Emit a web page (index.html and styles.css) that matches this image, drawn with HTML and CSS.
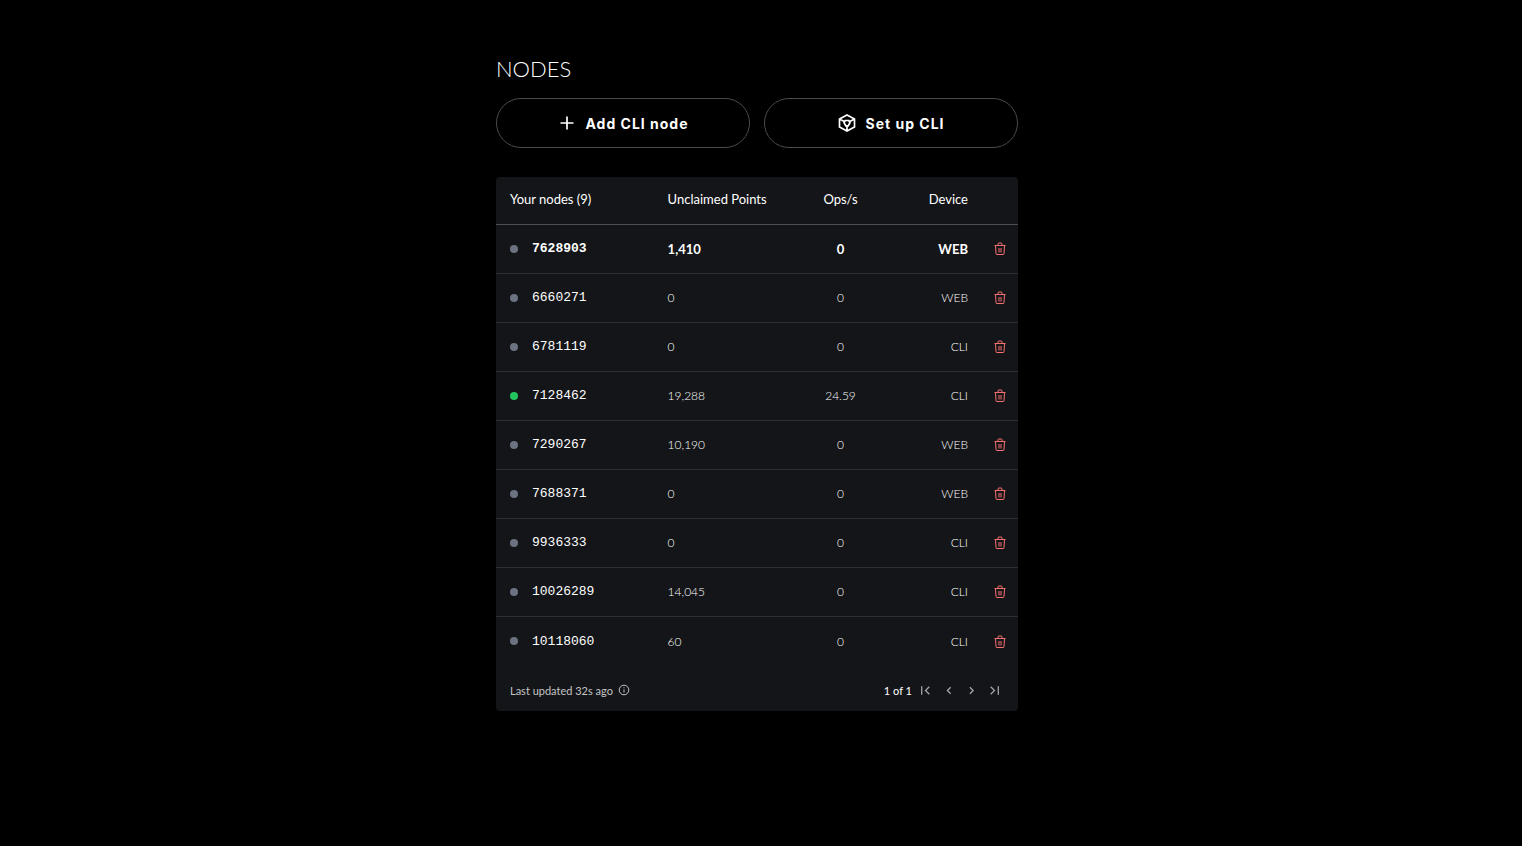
FILE: index.html
```html
<!DOCTYPE html>
<html lang="en">
<head>
    <meta charset="UTF-8">
    <meta name="viewport" content="width=device-width, initial-scale=1.0">
    <title>Nodes</title>
    <link rel="stylesheet" href="styles.css">
</head>
<body>
    <svg class="sprite" aria-hidden="true">
        <symbol id="trash" viewBox="0 0 12 13">
            <path d="M.5 3.500h11M1.500 3.500l.5 8a1 1 0 0 0 1 1h6a1 1 0 0 0 1-1l.5-8M4 3.500V2a1 1 0 0 1 1-1h2a1 1 0 0 1 1 1v1.500M5 6v4.500M7 6v4.500"/>
        </symbol>
    </svg>

    <main class="container">
        <h1>NODES</h1>

        <div class="actions">
            <button type="button" class="action">
                <svg class="action-icon" viewBox="0 0 20 20"><path d="M10 3.500v13M3.500 10h13"/></svg>
                Add CLI node
            </button>
            <button type="button" class="action">
                <svg class="action-icon" viewBox="0 0 20 20"><path d="M10 2l7.500 4v8L10 18l-7.500-4V6zM2.500 6l4.700 2.500M17.500 6l-4.700 2.500M10 13v5M8.200 7.500h3.600l1.200 2.300-1.800 3H8.800L7 9.800z"/></svg>
                Set up CLI
            </button>
        </div>

        <section class="panel">
            <table class="nodes">
                <thead>
                    <tr>
                        <th class="col-node">Your nodes (9)</th>
                        <th class="col-points">Unclaimed Points</th>
                        <th class="col-ops">Ops/s</th>
                        <th class="col-device">Device</th>
                        <td class="col-delete"></td>
                    </tr>
                </thead>
                <tbody id="nodeRows"></tbody>
            </table>

            <div class="panel-footer">
                <div class="updated">
                    Last updated 32s ago
                    <svg class="info-icon" viewBox="0 0 12 12"><circle cx="6" cy="6" r="4.800"/><path d="M6 5.500v3M6 3.300v1"/></svg>
                </div>
                <div class="pager">
                    <span>1 of 1</span>
                    <button type="button" aria-label="First page"><svg viewBox="0 0 12 12"><path d="M2.500 2v8M9.500 2.500L6 6l3.500 3.500"/></svg></button>
                    <button type="button" aria-label="Previous page"><svg viewBox="0 0 12 12"><path d="M8 3L5 6l3 3"/></svg></button>
                    <button type="button" aria-label="Next page"><svg viewBox="0 0 12 12"><path d="M4.500 3l3 3-3 3"/></svg></button>
                    <button type="button" aria-label="Last page"><svg viewBox="0 0 12 12"><path d="M2.500 2.500L6 6 2.500 9.500M9.500 2v8"/></svg></button>
                </div>
            </div>
        </section>
    </main>

    <script>
        // current: the node running in this browser
        const nodes = [
            { id: '7628903', points: '1,410', ops: '0', device: 'WEB', current: true },
            { id: '6660271', points: '0', ops: '0', device: 'WEB' },
            { id: '6781119', points: '0', ops: '0', device: 'CLI' },
            { id: '7128462', points: '19,288', ops: '24.59', device: 'CLI', online: true },
            { id: '7290267', points: '10,190', ops: '0', device: 'WEB' },
            { id: '7688371', points: '0', ops: '0', device: 'WEB' },
            { id: '9936333', points: '0', ops: '0', device: 'CLI' },
            { id: '10026289', points: '14,045', ops: '0', device: 'CLI' },
            { id: '10118060', points: '60', ops: '0', device: 'CLI' }
        ];

        document.getElementById('nodeRows').innerHTML = nodes.map(node => `
            <tr class="${node.current ? 'current' : ''}">
                <td class="col-node"><div class="node"><span class="dot ${node.online ? 'online' : ''}"></span><span class="node-id">${node.id}</span></div></td>
                <td class="col-points">${node.points}</td>
                <td class="col-ops">${node.ops}</td>
                <td class="col-device">${node.device}</td>
                <td class="col-delete"><button type="button" class="delete" aria-label="Delete node ${node.id}"><svg><use href="#trash"/></svg></button></td>
            </tr>`).join('');
    </script>
</body>
</html>
```
FILE: styles.css
```css
* {
    box-sizing: border-box;
}
body {
    margin: 0;
    padding: 55px 24px 56px 16px;
    background-color: #000;
    color: #fff;
    font-family: Lato, sans-serif;
    font-size: 13px;
}
.sprite {
    display: none;
}
.container {
    width: 100%;
    max-width: 522px;
    margin: 0 auto;
}
h1 {
    margin: 0 0 15px;
    font-size: 22px;
    line-height: 28px;
    font-weight: 300;
}
button {
    border: none;
    background: none;
    color: inherit;
    cursor: pointer;
}
svg {
    display: block;
    fill: none;
    stroke: currentColor;
}
.actions {
    display: flex;
    gap: 14px;
    margin-bottom: 29px;
}
.action {
    flex: 1;
    display: flex;
    align-items: center;
    justify-content: center;
    gap: 8px;
    height: 50px;
    border: 1px solid #4b4b4b;
    border-radius: 25px;
    font-family: Inter, sans-serif;
    font-size: 14px;
    font-weight: 700;
    letter-spacing: 1px;
}
.action-icon {
    width: 20px;
    height: 20px;
    stroke-width: 1.7;
}
.panel {
    background-color: #141518;
    border-radius: 4px;
    overflow: hidden;
}
.nodes {
    width: 100%;
    table-layout: fixed;
    border-collapse: separate;
    border-spacing: 0;
}
.nodes th,
.nodes td {
    height: 49px;
    padding: 0 14px 1px;
    border-bottom: 1px solid #2d2e31;
    text-align: left;
    font-weight: 300;
}
.nodes thead th,
.nodes thead td {
    height: 48px;
    padding-bottom: 3px;
    border-bottom-color: #4e4f52;
    font-weight: 400;
}
.nodes tbody td {
    font-size: 12px;
}
.nodes tbody tr:last-child td {
    border-bottom: none;
}
.nodes tbody .current td {
    font-size: 13px;
    font-weight: 700;
}
.nodes .col-node {
    width: 30%;
    padding-right: 0;
}
.nodes .col-points {
    width: 28%;
    padding-left: 15px;
}
.nodes .col-ops {
    width: 16%;
    padding-left: 0;
    padding-right: 0;
    text-align: center;
}
.nodes .col-device {
    padding-left: 0;
    text-align: right;
}
.nodes .col-delete {
    width: 36px;
    padding-left: 0;
    padding-right: 0;
}
.node {
    display: flex;
    align-items: center;
    gap: 14px;
}
.dot {
    width: 8px;
    height: 8px;
    border-radius: 50%;
    background-color: #6b7280;
}
.dot.online {
    background-color: #22c55e;
}
.node-id {
    font-family: "Liberation Mono", monospace;
    font-size: 13px;
    font-weight: 400;
}
.current .node-id {
    font-weight: 700;
}
.delete {
    display: block;
    padding: 0;
    margin-left: 12px;
    color: #f87171;
}
.delete svg {
    width: 12px;
    height: 13px;
}
.panel-footer {
    display: flex;
    align-items: center;
    justify-content: space-between;
    height: 45px;
    padding: 3px 14px 0;
    font-size: 11px;
}
.updated {
    display: flex;
    align-items: center;
    gap: 5px;
    color: #c4c4c6;
}
.info-icon {
    width: 12px;
    height: 12px;
}
.pager {
    display: flex;
    align-items: center;
    gap: 4px;
}
.pager button {
    padding: 0 3px;
    color: #a4a5a7;
}
.pager svg {
    width: 13px;
    height: 13px;
    stroke-width: 1.2;
}
```
